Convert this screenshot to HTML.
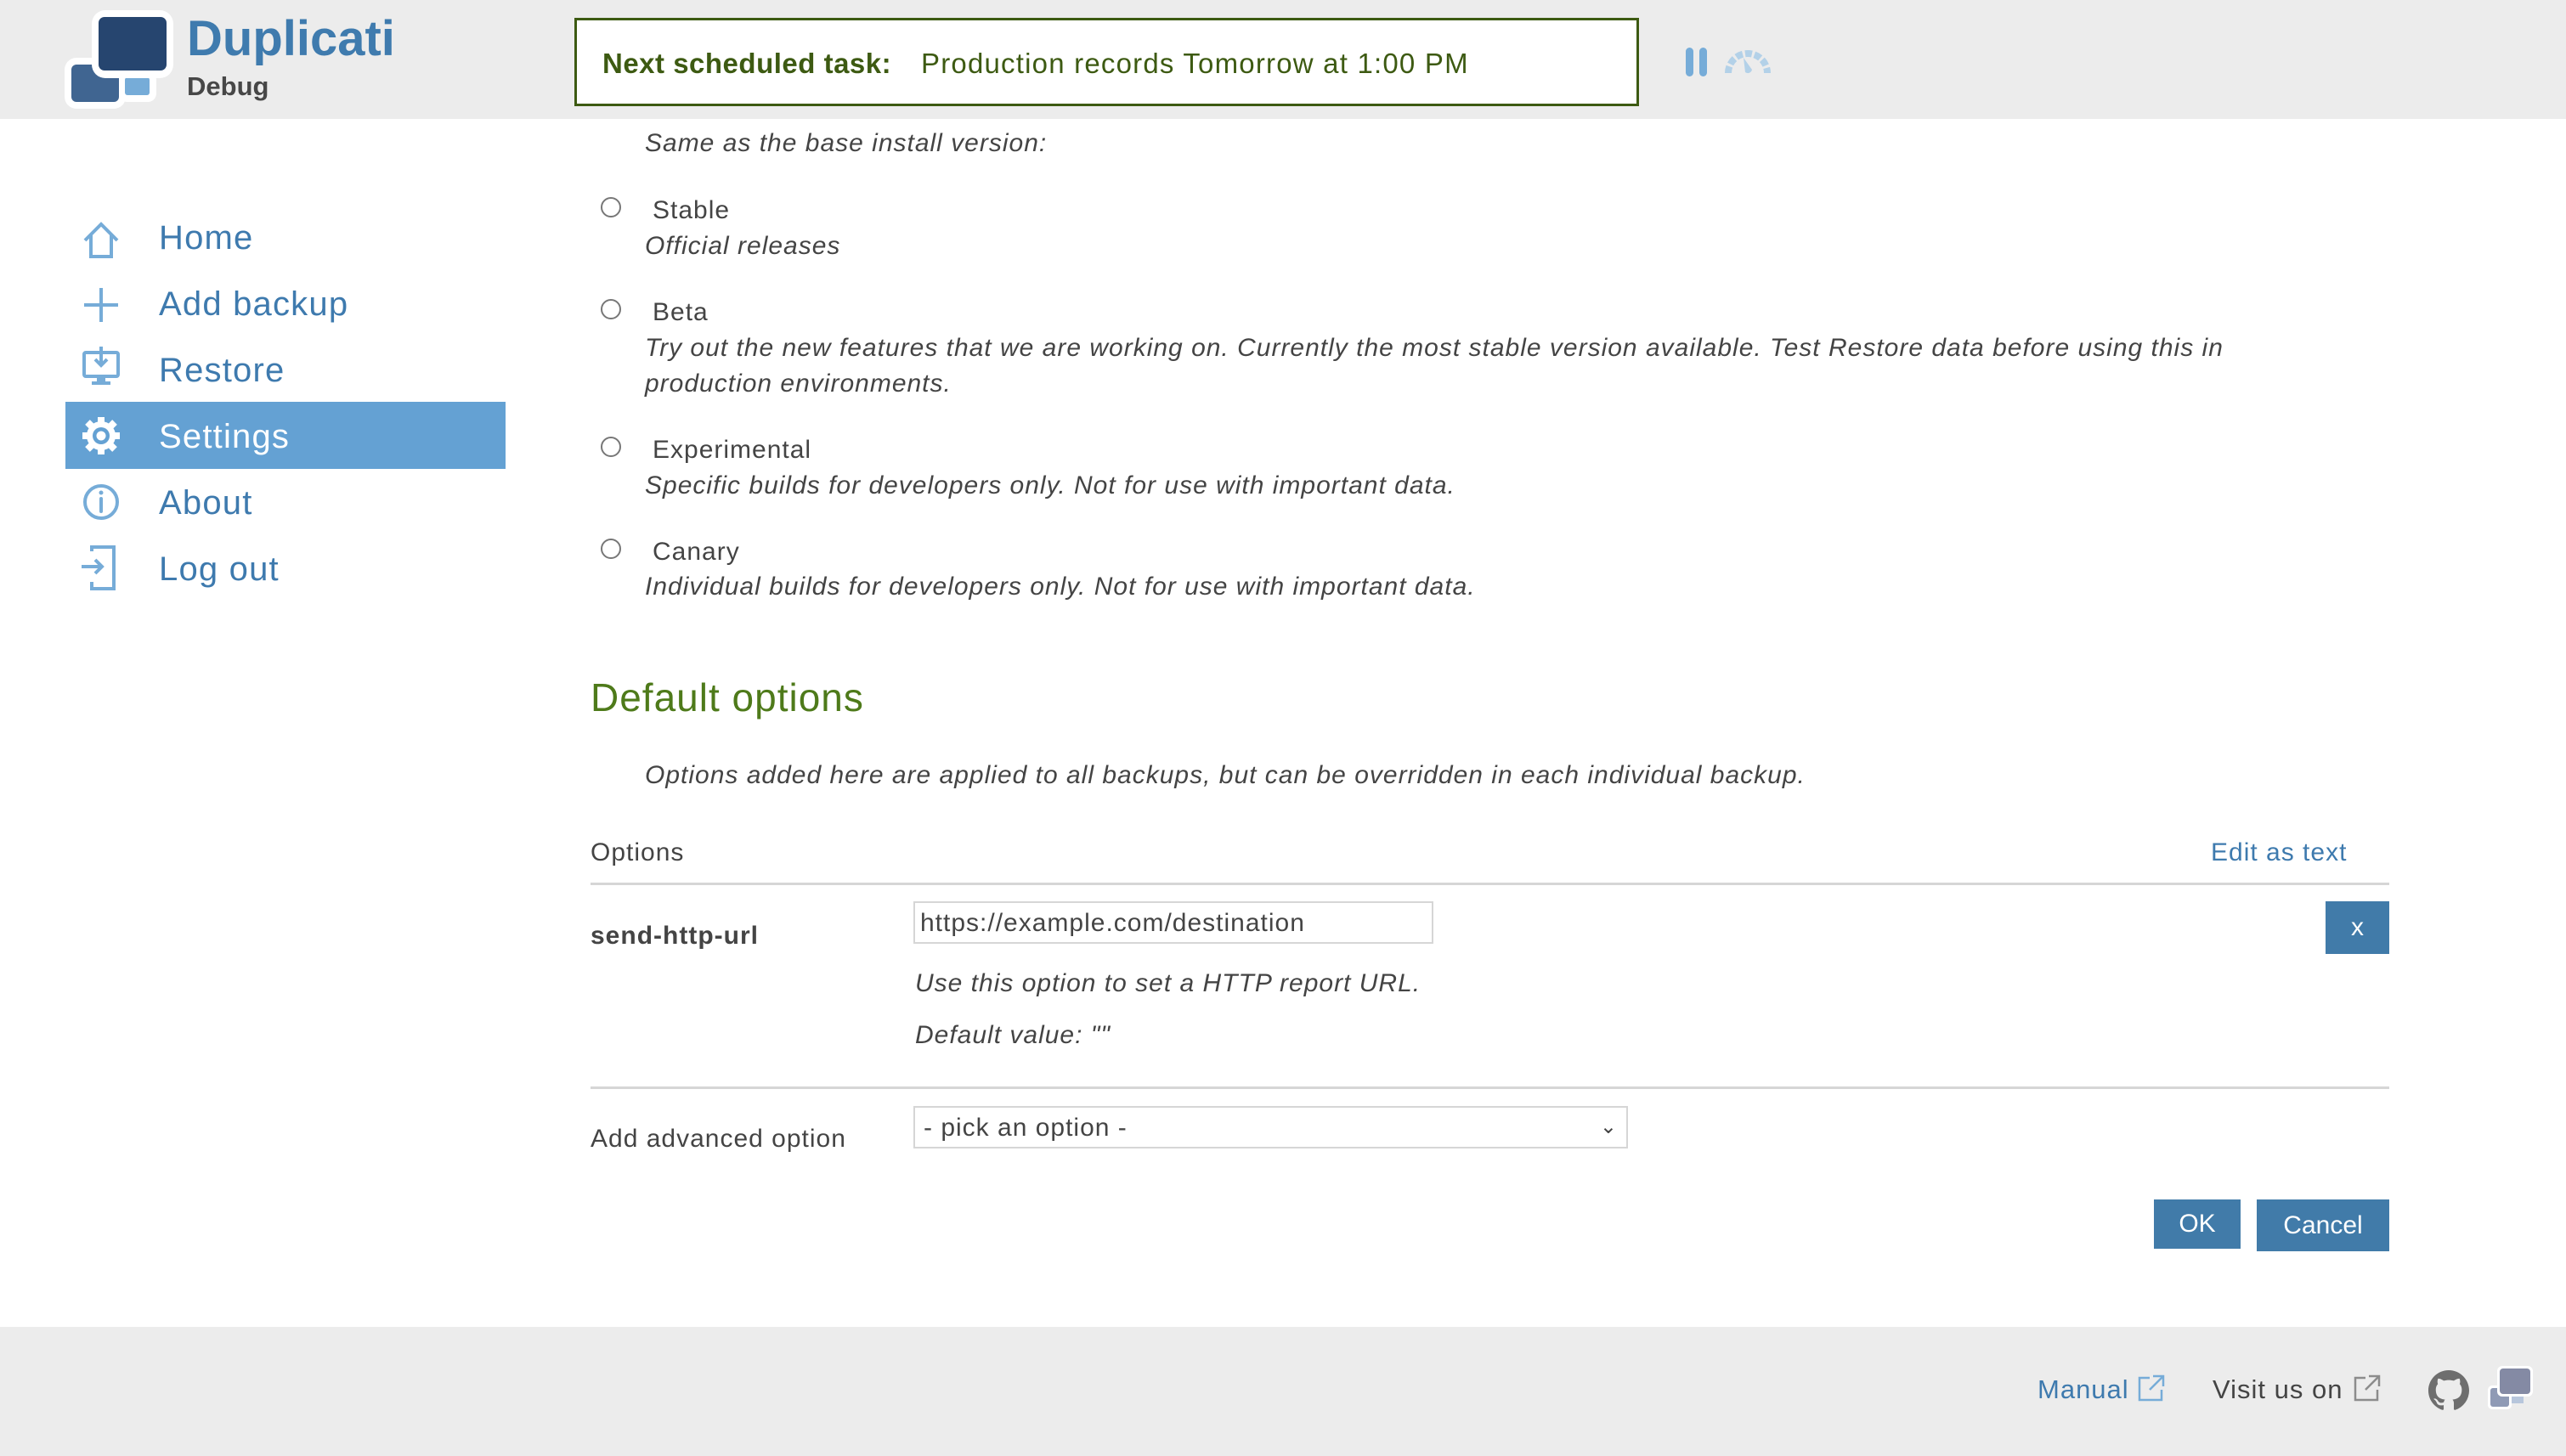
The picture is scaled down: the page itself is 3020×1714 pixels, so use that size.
<!DOCTYPE html>
<html><head><meta charset="utf-8"><style>
*{margin:0;padding:0;box-sizing:border-box}
body{width:3020px;height:1714px;position:relative;overflow:hidden;background:#fff;font-family:"Liberation Sans","DejaVu Sans",sans-serif;color:#444}
.a{position:absolute;white-space:nowrap}
#hdr{position:absolute;left:0;top:0;width:3020px;height:140px;background:#ececec}
#ftr{position:absolute;left:0;top:1562px;width:3020px;height:152px;background:#ececec}
.nav{position:absolute;left:187px;font-size:40px;color:#3e7aae;line-height:1;letter-spacing:1.2px}
.lbl{font-size:30px;color:#444;letter-spacing:1px}
.it{font-size:30px;font-style:italic;color:#444;letter-spacing:1px}
.rad{position:absolute;width:24px;height:24px;border:2px solid #777;border-radius:50%;background:#fff}
.btn{position:absolute;background:#417ba9;color:#fff;font-size:30px;text-align:center}
</style></head><body>
<div id="hdr"></div>
<!-- logo -->
<div class="a" style="left:76px;top:68px;width:72px;height:60px;background:#fff;border-radius:14px"></div>
<div class="a" style="left:84px;top:76px;width:56px;height:44px;background:#406591;border-radius:6px"></div>
<div class="a" style="left:140px;top:84px;width:44px;height:36px;background:#fff;border-radius:10px"></div>
<div class="a" style="left:147px;top:91px;width:29px;height:21px;background:#76acd8;border-radius:3px"></div>
<div class="a" style="left:108px;top:12px;width:96px;height:80px;background:#fff;border-radius:16px"></div>
<div class="a" style="left:116px;top:20px;width:80px;height:63px;background:#26456f;border-radius:7px"></div>
<div class="a" style="left:220px;top:12px;font-size:58px;font-weight:bold;color:#3f7bae">Duplicati</div>
<div class="a" style="left:220px;top:84px;font-size:31px;font-weight:bold;color:#474747">Debug</div>
<!-- scheduled -->
<div class="a" style="left:676px;top:21px;width:1253px;height:104px;border:3px solid #3d5a12;background:#fff"></div>
<div class="a" style="left:709px;top:56px;font-size:33px;color:#3d5a12;letter-spacing:0.5px"><b>Next scheduled task:</b></div>
<div class="a" style="left:1084px;top:56px;font-size:33px;color:#3d5a12;letter-spacing:1.2px">Production records Tomorrow at 1:00 PM</div>
<div class="a" style="left:1984px;top:56px;width:9px;height:34px;background:#76acd8;border-radius:5px"></div>
<div class="a" style="left:2000px;top:56px;width:9px;height:34px;background:#76acd8;border-radius:5px"></div>
<svg class="a" style="left:2028px;top:54px" width="58" height="34" viewBox="0 0 58 34"><g fill="none" stroke="#b3d1e8" stroke-width="8" stroke-dasharray="8 3"><path d="M6 32 A23 23 0 0 1 52 32"/></g><path d="M24 14 L34 28 A5 5 0 0 1 26 31 Z" fill="#b3d1e8"/></svg>
<!-- sidebar -->
<div class="a" style="left:77px;top:473px;width:518px;height:79px;background:#64a1d3"></div>
<svg class="a" style="left:94px;top:255px" width="50" height="230" viewBox="0 0 50 230" fill="none" stroke="#76acd8" stroke-width="4">
<path d="M6 28 L25 9 L44 28 M13 22 V47 H37 V22"/>
<path d="M25 84 V124 M5 104 H45"/>
<rect x="5" y="160" width="40" height="28" rx="2"/><path d="M25 153 V175 M18 168 L25 175 L32 168"/><rect x="20" y="188" width="10" height="7" fill="#76acd8" stroke="none"/><rect x="14" y="194" width="22" height="4" fill="#76acd8" stroke="none"/>
</svg>
<svg class="a" style="left:94px;top:566px" width="50" height="50" viewBox="0 0 50 50" fill="none" stroke="#76acd8" stroke-width="4">
<circle cx="25" cy="25" r="19"/>
<path d="M25 21 V36" stroke-linecap="round"/>
<circle cx="25" cy="14" r="2.5" fill="#76acd8" stroke="none"/>
</svg>
<svg class="a" style="left:94px;top:488px" width="50" height="50" viewBox="0 0 50 50"><g fill="#fff"><circle cx="25" cy="25" r="17"/><g stroke="#fff" stroke-width="8"><path d="M25 3 V47 M3 25 H47 M9 9 L41 41 M41 9 L9 41"/></g></g><circle cx="25" cy="25" r="10" fill="#64a1d3"/><circle cx="25" cy="25" r="5.5" fill="#fff"/></svg>
<svg class="a" style="left:94px;top:641px" width="50" height="56" viewBox="0 0 50 56" fill="none" stroke="#76acd8" stroke-width="4"><path d="M14 8 V3 H40 V52 H14 V44"/><path d="M2 26 H26 M18 18 L26 26 L18 34"/></svg>
<div class="nav" style="top:260px">Home</div>
<div class="nav" style="top:338px">Add backup</div>
<div class="nav" style="top:416px">Restore</div>
<div class="nav" style="top:494px;color:#fff">Settings</div>
<div class="nav" style="top:572px">About</div>
<div class="nav" style="top:650px">Log out</div>
<!-- content -->
<div class="a it" style="left:759px;top:152px">Same as the base install version:</div>
<div class="rad" style="left:707px;top:232px"></div><div class="a lbl" style="left:768px;top:231px">Stable</div>
<div class="a it" style="left:759px;top:273px">Official releases</div>
<div class="rad" style="left:707px;top:352px"></div><div class="a lbl" style="left:768px;top:351px">Beta</div>
<div class="a it" style="left:759px;top:393px">Try out the new features that we are working on. Currently the most stable version available. Test Restore data before using this in</div>
<div class="a it" style="left:759px;top:435px">production environments.</div>
<div class="rad" style="left:707px;top:514px"></div><div class="a lbl" style="left:768px;top:513px">Experimental</div>
<div class="a it" style="left:759px;top:555px">Specific builds for developers only. Not for use with important data.</div>
<div class="rad" style="left:707px;top:634px"></div><div class="a lbl" style="left:768px;top:633px">Canary</div>
<div class="a it" style="left:759px;top:674px">Individual builds for developers only. Not for use with important data.</div>
<div class="a" style="left:695px;top:794px;font-size:46px;color:#4e7a1a;letter-spacing:1px">Default options</div>
<div class="a it" style="left:759px;top:896px">Options added here are applied to all backups, but can be overridden in each individual backup.</div>
<div class="a lbl" style="left:695px;top:987px">Options</div>
<div class="a" style="left:2602px;top:987px;font-size:30px;color:#3e7aae;letter-spacing:1px">Edit as text</div>
<div class="a" style="left:695px;top:1039px;width:2117px;height:3px;background:#d6d6d6"></div>
<div class="a lbl" style="left:695px;top:1085px;font-weight:bold">send-http-url</div>
<div class="a" style="left:1075px;top:1061px;width:612px;height:50px;border:2px solid #d6d6d6;font-size:30px;color:#444;padding:7px 6px;letter-spacing:1px">https://example.com/destination</div>
<div class="btn" style="left:2737px;top:1061px;width:75px;height:62px;line-height:62px">x</div>
<div class="a it" style="left:1077px;top:1141px">Use this option to set a HTTP report URL.</div>
<div class="a it" style="left:1077px;top:1202px">Default value: ""</div>
<div class="a" style="left:695px;top:1279px;width:2117px;height:3px;background:#d6d6d6"></div>
<div class="a lbl" style="left:695px;top:1324px">Add advanced option</div>
<div class="a" style="left:1075px;top:1302px;width:841px;height:50px;border:2px solid #d6d6d6;font-size:30px;color:#444;padding:7px 10px;letter-spacing:1px">- pick an option -<span style="position:absolute;right:10px;top:8px;font-size:24px">&#8964;</span></div>
<div class="btn" style="left:2535px;top:1412px;width:102px;height:58px;line-height:58px">OK</div>
<div class="btn" style="left:2656px;top:1412px;width:156px;height:61px;line-height:61px">Cancel</div>
<!-- footer -->
<div id="ftr"></div>
<div class="a" style="left:2398px;top:1618px;font-size:31px;color:#3e7aae;letter-spacing:1px">Manual</div>
<svg class="a" style="left:2516px;top:1618px" width="32" height="32" viewBox="0 0 32 32" fill="none" stroke="#76acd8" stroke-width="2.5"><path d="M14 4 H2 V30 H28 V18 M18 2 H30 V14 M30 2 L14 18"/></svg>
<div class="a" style="left:2604px;top:1618px;font-size:31px;color:#444;letter-spacing:1px">Visit us on</div>
<svg class="a" style="left:2770px;top:1618px" width="32" height="32" viewBox="0 0 32 32" fill="none" stroke="#8c8c8c" stroke-width="2.5"><path d="M14 4 H2 V30 H28 V18 M18 2 H30 V14 M30 2 L14 18"/></svg>
<svg class="a" style="left:2858px;top:1611px" width="48" height="52" viewBox="0 0 16 16"><path fill="#6e6e6e" d="M8 0C3.580 0 0 3.58 0 8c0 3.54 2.29 6.53 5.47 7.59.4.07.55-.17.55-.38 0-.19-.01-.82-.01-1.49-2.01.37-2.53-.49-2.69-.94-.09-.23-.48-.94-.82-1.13-.28-.15-.68-.52-.01-.53.63-.01 1.08.58 1.23.82.72 1.21 1.87.87 2.33.66.07-.52.28-.87.51-1.07-1.78-.2-3.64-.89-3.64-3.95 0-.87.31-1.59.82-2.15-.08-.2-.36-1.02.08-2.12 0 0 .67-.21 2.2.82.64-.18 1.32-.27 2-.27.68 0 1.36.09 2 .27 1.53-1.04 2.2-.82 2.2-.82.44 1.1.16 1.92.08 2.12.51.56.82 1.27.82 2.15 0 3.07-1.87 3.75-3.65 3.95.29.25.54.73.54 1.48 0 1.07-.01 1.93-.01 2.2 0 .21.15.46.55.38A8.013 8.013 0 0016 8c0-4.42-3.58-8-8-8z"/></svg>
<div class="a" style="left:2928px;top:1631px;width:28px;height:28px;background:#fff;border-radius:5px"></div>
<div class="a" style="left:2931px;top:1634px;width:22px;height:22px;background:#8f9ab5;border-radius:3px"></div>
<div class="a" style="left:2956px;top:1640px;width:14px;height:12px;background:#b7c6dc"></div>
<div class="a" style="left:2939px;top:1608px;width:42px;height:36px;background:#fff;border-radius:6px"></div>
<div class="a" style="left:2942px;top:1611px;width:36px;height:30px;background:#848aa4;border-radius:4px"></div>
</body></html>
